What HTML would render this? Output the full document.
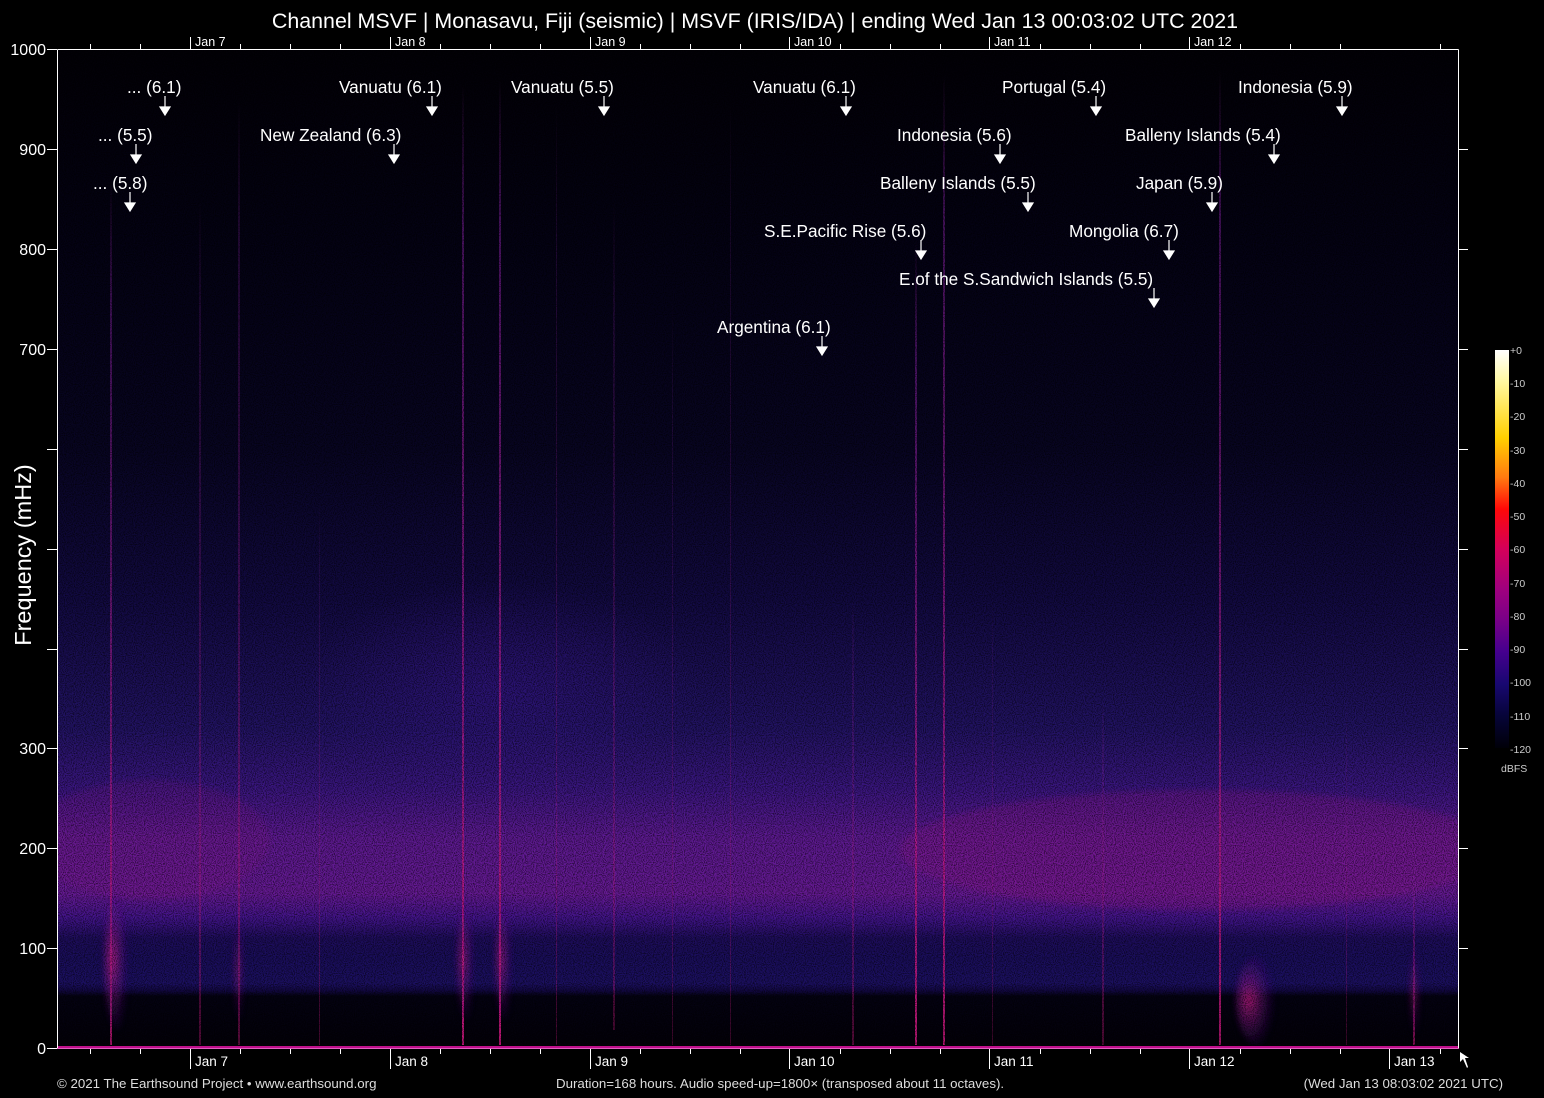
<!DOCTYPE html>
<html><head><meta charset="utf-8"><style>
html,body{margin:0;padding:0;background:#000;width:1544px;height:1098px;overflow:hidden}
svg{display:block}
text{font-family:"Liberation Sans",Arial,sans-serif;fill:#fff}
</style></head><body>
<svg width="1544" height="1098" viewBox="0 0 1544 1098" xmlns="http://www.w3.org/2000/svg">
<defs>
<clipPath id="plot"><rect x="57" y="49" width="1402" height="999"/></clipPath>
<linearGradient id="bg" x1="0" y1="49" x2="0" y2="1048" gradientUnits="userSpaceOnUse">
<stop offset="0" stop-color="#020106"/>
<stop offset="0.2" stop-color="#040214"/>
<stop offset="0.4" stop-color="#080522"/>
<stop offset="0.55" stop-color="#120a42"/>
<stop offset="0.68" stop-color="#221364"/>
<stop offset="0.74" stop-color="#3a1680"/>
<stop offset="0.79" stop-color="#5e1a92"/>
<stop offset="0.845" stop-color="#661a94"/>
<stop offset="0.87" stop-color="#42148a"/>
<stop offset="0.89" stop-color="#1e0d5c"/>
<stop offset="0.91" stop-color="#1a0e5c"/>
<stop offset="0.935" stop-color="#1c1062"/>
<stop offset="0.943" stop-color="#120842"/>
<stop offset="0.948" stop-color="#040212"/>
<stop offset="1" stop-color="#030108"/>
</linearGradient>
<linearGradient id="cb" x1="0" y1="350" x2="0" y2="748" gradientUnits="userSpaceOnUse">
<stop offset="0" stop-color="#ffffff"/>
<stop offset="0.08" stop-color="#fff8a0"/>
<stop offset="0.22" stop-color="#ffd000"/>
<stop offset="0.32" stop-color="#ff7a10"/>
<stop offset="0.4" stop-color="#ff0808"/>
<stop offset="0.5" stop-color="#d4005a"/>
<stop offset="0.6" stop-color="#a0007e"/>
<stop offset="0.68" stop-color="#780088"/>
<stop offset="0.76" stop-color="#44008e"/>
<stop offset="0.84" stop-color="#180870"/>
<stop offset="0.92" stop-color="#060438"/>
<stop offset="1" stop-color="#000008"/>
</linearGradient>
<linearGradient id="ev" x1="0" y1="0" x2="0" y2="1">
<stop offset="0" stop-color="#9020a0" stop-opacity="0"/>
<stop offset="0.15" stop-color="#8020a0" stop-opacity="0.6"/>
<stop offset="1" stop-color="#d01880" stop-opacity="1"/>
</linearGradient>
<radialGradient id="coda" cx="0.3" cy="0.5" r="0.6">
<stop offset="0" stop-color="#d02088" stop-opacity="0.8"/>
<stop offset="1" stop-color="#4010a0" stop-opacity="0"/>
</radialGradient>
<radialGradient id="hump" cx="0.5" cy="0.5" r="0.5">
<stop offset="0" stop-color="#3a1690" stop-opacity="0.5"/>
<stop offset="1" stop-color="#3a1690" stop-opacity="0"/>
</radialGradient>
<filter id="noise" x="0" y="0" width="100%" height="100%">
<feTurbulence type="fractalNoise" baseFrequency="0.9" numOctaves="1" seed="3"/>
<feColorMatrix type="matrix" values="0 0 0 0 0  0 0 0 0 0  0 0 0 0 0  3 0 0 0 -1.2"/>
</filter>
<filter id="blur"><feGaussianBlur stdDeviation="3"/></filter>
</defs>

<g clip-path="url(#plot)">
<rect x="57" y="49" width="1402" height="999" fill="url(#bg)"/>
<ellipse cx="500" cy="690" rx="200" ry="110" fill="url(#hump)"/>
<ellipse cx="1200" cy="850" rx="300" ry="60" fill="#a0188a" opacity="0.25" filter="url(#blur)"/>
<ellipse cx="150" cy="840" rx="120" ry="60" fill="#a0188a" opacity="0.15" filter="url(#blur)"/>
<g>
<rect x="110" y="180" width="2" height="865" fill="url(#ev)" opacity="0.8"/>
<rect x="199" y="200" width="2" height="845" fill="url(#ev)" opacity="0.4"/>
<rect x="238" y="100" width="2" height="945" fill="url(#ev)" opacity="0.45"/>
<rect x="319" y="500" width="1" height="545" fill="url(#ev)" opacity="0.35"/>
<rect x="462" y="85" width="2" height="960" fill="url(#ev)" opacity="0.9"/>
<rect x="499" y="80" width="2" height="965" fill="url(#ev)" opacity="0.95"/>
<rect x="556" y="100" width="1" height="945" fill="url(#ev)" opacity="0.35"/>
<rect x="613" y="200" width="2" height="830" fill="url(#ev)" opacity="0.35"/>
<rect x="672" y="300" width="1" height="745" fill="url(#ev)" opacity="0.3"/>
<rect x="730" y="100" width="1" height="945" fill="url(#ev)" opacity="0.3"/>
<rect x="852" y="600" width="2" height="445" fill="url(#ev)" opacity="0.4"/>
<rect x="915" y="240" width="2" height="805" fill="url(#ev)" opacity="0.9"/>
<rect x="943" y="75" width="2" height="970" fill="url(#ev)" opacity="0.85"/>
<rect x="992" y="600" width="1" height="445" fill="url(#ev)" opacity="0.3"/>
<rect x="1102" y="700" width="2" height="345" fill="url(#ev)" opacity="0.4"/>
<rect x="1219" y="70" width="2" height="975" fill="url(#ev)" opacity="0.85"/>
<rect x="1413" y="850" width="2" height="195" fill="url(#ev)" opacity="0.6"/>
<rect x="1346" y="700" width="1" height="345" fill="url(#ev)" opacity="0.3"/>
</g>
<g filter="url(#blur)">
<ellipse cx="118" cy="960" rx="14" ry="70" fill="url(#coda)"/>
<ellipse cx="467" cy="960" rx="10" ry="60" fill="url(#coda)" opacity="0.8"/>
<ellipse cx="505" cy="960" rx="10" ry="60" fill="url(#coda)" opacity="0.8"/>
<ellipse cx="1258" cy="1000" rx="22" ry="45" fill="url(#coda)"/>
<ellipse cx="240" cy="970" rx="6" ry="50" fill="url(#coda)" opacity="0.6"/>
<ellipse cx="1416" cy="990" rx="6" ry="45" fill="url(#coda)" opacity="0.6"/>
</g>
<rect x="57" y="49" width="1402" height="999" filter="url(#noise)" opacity="0.6"/>
</g>
<rect x="57" y="1046" width="1402" height="2" fill="#c0108c"/>

<g stroke="#fff" stroke-width="1" fill="none">
<path d="M57.5 49.5H1458.5M57.5 49.5V1048.5M1458.5 49.5V1048.5"/>
<path d="M57 1048.5H1459" stroke="#e060c0"/>
<path d="M47 49.5H57M47 149.5H57M47 249.5H57M47 349.5H57M47 449.5H57M47 549.5H57M47 649.5H57M47 748.5H57M47 848.5H57M47 948.5H57M47 1048.5H57"/>
<path d="M1459 149.5H1468M1459 249.5H1468M1459 349.5H1468M1459 449.5H1468M1459 549.5H1468M1459 649.5H1468M1459 748.5H1468M1459 848.5H1468M1459 948.5H1468"/>
<path d="M90.5 49V44M140.5 49V44M240.5 49V44M290.5 49V44M340.5 49V44M440.5 49V44M490.5 49V44M540.5 49V44M640.5 49V44M690.5 49V44M740.5 49V44M840.5 49V44M890.5 49V44M940.5 49V44M1040.5 49V44M1090.5 49V44M1140.5 49V44M1240.5 49V44M1290.5 49V44M1340.5 49V44M1440.5 49V44"/>
<path d="M190.5 49V37M390.5 49V37M590.5 49V37M789.5 49V37M989.5 49V37M1189.5 49V37"/>
<path d="M90.5 1049V1054M140.5 1049V1054M240.5 1049V1054M290.5 1049V1054M340.5 1049V1054M440.5 1049V1054M490.5 1049V1054M540.5 1049V1054M640.5 1049V1054M690.5 1049V1054M740.5 1049V1054M840.5 1049V1054M890.5 1049V1054M940.5 1049V1054M1040.5 1049V1054M1090.5 1049V1054M1140.5 1049V1054M1240.5 1049V1054M1290.5 1049V1054M1340.5 1049V1054M1440.5 1049V1054"/>
<path d="M190.5 1049V1069M390.5 1049V1069M590.5 1049V1069M789.5 1049V1069M989.5 1049V1069M1189.5 1049V1069M1389.5 1049V1069"/>
</g>
<path d="M1460 1052 L1460 1062 L1463 1059 L1467 1068 L1468 1067 L1465 1058 L1469 1058 Z" fill="#fff"/>

<g font-size="16" text-anchor="end">
<text x="46" y="55">1000</text>
<text x="46" y="155">900</text>
<text x="46" y="255">800</text>
<text x="46" y="355">700</text>
<text x="46" y="754">300</text>
<text x="46" y="854">200</text>
<text x="46" y="954">100</text>
<text x="46" y="1054">0</text>
</g>
<text transform="translate(31 555) rotate(-90)" font-size="23.5" text-anchor="middle">Frequency (mHz)</text>

<text x="755" y="28" font-size="21.4" text-anchor="middle">Channel MSVF | Monasavu, Fiji (seismic) | MSVF (IRIS/IDA) | ending Wed Jan 13 00:03:02 UTC 2021</text>

<g font-size="12.5">
<text x="195" y="46">Jan  7</text><text x="395" y="46">Jan  8</text><text x="595" y="46">Jan  9</text>
<text x="794" y="46">Jan 10</text><text x="994" y="46">Jan 11</text><text x="1194" y="46">Jan 12</text>
</g>
<g font-size="13.5">
<text x="195" y="1066">Jan  7</text><text x="395" y="1066">Jan  8</text><text x="595" y="1066">Jan  9</text>
<text x="794" y="1066">Jan 10</text><text x="994" y="1066">Jan 11</text><text x="1194" y="1066">Jan 12</text><text x="1394" y="1066">Jan 13</text>
</g>

<g font-size="13.3">
<text x="57" y="1088" style="fill:#ddd">© 2021 The Earthsound Project • www.earthsound.org</text>
<text x="556" y="1088" style="fill:#ddd">Duration=168 hours. Audio speed-up=1800× (transposed about 11 octaves).</text>
<text x="1503" y="1088" text-anchor="end" style="fill:#ddd">(Wed Jan 13 08:03:02 2021 UTC)</text>
</g>

<rect x="1495" y="350" width="14" height="398" fill="url(#cb)"/>
<g font-size="10.5">
<text x="1510" y="354" style="fill:#ccc">+0</text>
<text x="1510" y="387" style="fill:#ccc">-10</text>
<text x="1510" y="420" style="fill:#ccc">-20</text>
<text x="1510" y="454" style="fill:#ccc">-30</text>
<text x="1510" y="487" style="fill:#ccc">-40</text>
<text x="1510" y="520" style="fill:#ccc">-50</text>
<text x="1510" y="553" style="fill:#ccc">-60</text>
<text x="1510" y="587" style="fill:#ccc">-70</text>
<text x="1510" y="620" style="fill:#ccc">-80</text>
<text x="1510" y="653" style="fill:#ccc">-90</text>
<text x="1510" y="686" style="fill:#ccc">-100</text>
<text x="1510" y="720" style="fill:#ccc">-110</text>
<text x="1510" y="753" style="fill:#ccc">-120</text>
<text x="1501" y="772" style="fill:#ccc">dBFS</text>
</g>

<g font-size="17.2">
<text x="127" y="93">... (6.1)</text>
<text x="98" y="141">... (5.5)</text>
<text x="93" y="189">... (5.8)</text>
<text x="339" y="93">Vanuatu (6.1)</text>
<text x="260" y="141">New Zealand (6.3)</text>
<text x="511" y="93">Vanuatu (5.5)</text>
<text x="753" y="93">Vanuatu (6.1)</text>
<text x="897" y="141">Indonesia (5.6)</text>
<text x="880" y="189">Balleny Islands (5.5)</text>
<text x="764" y="237">S.E.Pacific Rise (5.6)</text>
<text x="717" y="333">Argentina (6.1)</text>
<text x="1002" y="93">Portugal (5.4)</text>
<text x="1238" y="93">Indonesia (5.9)</text>
<text x="1125" y="141">Balleny Islands (5.4)</text>
<text x="1136" y="189">Japan (5.9)</text>
<text x="1069" y="237">Mongolia (6.7)</text>
<text x="899" y="285">E.of the S.Sandwich Islands (5.5)</text>
</g>
<g stroke="#fff" stroke-width="1.2" fill="#fff">
<path d="M165 96V108"/><path d="M160 107H170L165 115Z"/>
<path d="M136 144V156"/><path d="M131 155H141L136 163Z"/>
<path d="M130 192V204"/><path d="M125 203H135L130 211Z"/>
<path d="M432 96V108"/><path d="M427 107H437L432 115Z"/>
<path d="M394 144V156"/><path d="M389 155H399L394 163Z"/>
<path d="M604 96V108"/><path d="M599 107H609L604 115Z"/>
<path d="M846 96V108"/><path d="M841 107H851L846 115Z"/>
<path d="M1000 144V156"/><path d="M995 155H1005L1000 163Z"/>
<path d="M1028 192V204"/><path d="M1023 203H1033L1028 211Z"/>
<path d="M921 240V252"/><path d="M916 251H926L921 259Z"/>
<path d="M822 336V348"/><path d="M817 347H827L822 355Z"/>
<path d="M1096 96V108"/><path d="M1091 107H1101L1096 115Z"/>
<path d="M1342 96V108"/><path d="M1337 107H1347L1342 115Z"/>
<path d="M1274 144V156"/><path d="M1269 155H1279L1274 163Z"/>
<path d="M1212 192V204"/><path d="M1207 203H1217L1212 211Z"/>
<path d="M1169 240V252"/><path d="M1164 251H1174L1169 259Z"/>
<path d="M1154 288V300"/><path d="M1149 299H1159L1154 307Z"/>
</g>
</svg>
</body></html>
